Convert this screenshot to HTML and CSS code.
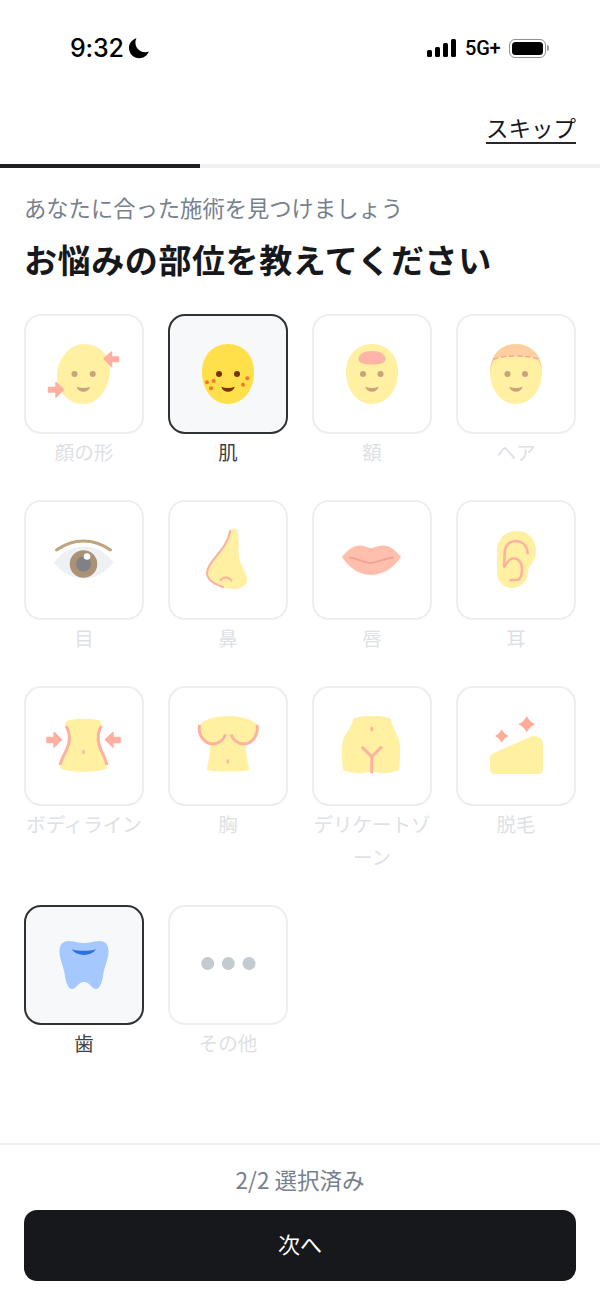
FILE: index.html
```html
<!DOCTYPE html>
<html lang="ja">
<head>
  <meta charset="UTF-8">
  <title>お悩みの部位</title>
  <link rel="stylesheet" href="styles.css">
</head>
<body>

  <div class="statusbar">
    <div class="status-left">
      <span class="time">9:32</span>
      <svg class="moon" width="22" height="24" viewBox="0 0 22 24"><path d="M8.5 2.2C3.9 3.5 1 7.4 1 12c0 5.7 4.6 10.2 10.2 10.2 4.4 0 8.2-2.7 9.6-6.7-1.1.5-2.4.7-3.7.7-5.4 0-9.7-4.3-9.7-9.7 0-1.5.3-2.9 1.1-4.3z"/></svg>
    </div>
    <div class="status-right">
      <div class="signal"><i class="b1"></i><i class="b2"></i><i class="b3"></i><i class="b4"></i></div>
      <span class="network">5G+</span>
      <div class="battery"><div class="battery-fill"></div></div>
      <div class="battery-cap"></div>
    </div>
  </div>

  <div class="topbar">
    <a class="skip">スキップ</a>
  </div>

  <div class="progress"><div class="progress-done"></div></div>

  <p class="sub">あなたに合った施術を見つけましょう</p>
  <h1>お悩みの部位を教えてください</h1>

  <div class="parts">

    <div class="part">
      <div class="tile">
        <svg class="icon faded" viewBox="0 0 120 120">
          <path class="skin" d="M60 30C75 30 86.500 41 86 56 85.500 74 75 90 59 90 44 90 32.500 77 33 62 33.500 45 45 30 60 30z"/>
          <circle class="eye" cx="50.500" cy="60" r="3"/><circle class="eye" cx="68.700" cy="60" r="3"/>
          <path class="mouth" d="M52.700 72.700c4 1.600 9.300 1.600 13.300 0-1.500 6.700-11.800 6.700-13.300 0z"/>
          <path class="arrow" d="M80 44.500l7.500-6.500v5H94.500v4.500H87.500v5z"/>
          <path class="arrow" d="M39.500 75.500l-7.500-7v5H24.500v4.500H32v5z"/>
        </svg>
      </div>
      <span class="label">顔の形</span>
    </div>

    <div class="part on">
      <div class="tile">
        <svg class="icon" viewBox="0 0 120 120">
          <path class="skin" d="M60 30c15 0 26 11 26 28 0 18-11 32-26 32S34 76 34 58c0-17 11-28 26-28z"/>
          <circle class="eye-dark" cx="51" cy="60" r="3"/><circle class="eye-dark" cx="69" cy="60" r="3"/>
          <path class="mouth-dark" d="M53.300 72.700c4 1.600 9.300 1.600 13.300 0-1.500 6.700-11.800 6.700-13.300 0z"/>
          <g class="freckle">
            <circle cx="39" cy="68.300" r="2"/><circle cx="45.700" cy="67" r="2"/><circle cx="43" cy="74.300" r="2"/>
            <circle cx="79.300" cy="64.300" r="2"/><circle cx="75" cy="70.700" r="2"/>
          </g>
        </svg>
      </div>
      <span class="label">肌</span>
    </div>

    <div class="part">
      <div class="tile">
        <svg class="icon faded" viewBox="0 0 120 120">
          <path class="skin" d="M60 30c15 0 26 11 26 28 0 18-11 32-26 32S34 76 34 58c0-17 11-28 26-28z"/>
          <path class="patch" d="M60 37c8 0 13.500 3.500 13.500 8 0 4-5 5.500-13.500 5.500S46.500 49 46.500 45c0-4.500 5.500-8 13.500-8z"/>
          <circle class="eye" cx="51" cy="60" r="3"/><circle class="eye" cx="68.500" cy="60" r="3"/>
          <path class="mouth" d="M53.300 72.700c4 1.600 9.300 1.600 13.300 0-1.500 6.700-11.800 6.700-13.300 0z"/>
        </svg>
      </div>
      <span class="label">額</span>
    </div>

    <div class="part">
      <div class="tile">
        <svg class="icon faded" viewBox="0 0 120 120">
          <path class="skin" d="M60 30c15 0 26 11 26 28 0 18-11 32-26 32S34 76 34 58c0-17 11-28 26-28z"/>
          <path class="hair" d="M34 58c0-17 11-28 26-28s26 11 26 28c-1-6-3-11-6-14-6-2-34-2-40 0-3 3-5 8-6 14z"/>
          <path class="hairline" d="M38 45c12-4 32-4 44 0"/>
          <circle class="eye" cx="51.500" cy="60" r="3"/><circle class="eye" cx="69" cy="60" r="3"/>
          <path class="mouth" d="M53.300 72.700c4 1.600 9.300 1.600 13.300 0-1.500 6.700-11.800 6.700-13.300 0z"/>
        </svg>
      </div>
      <span class="label">ヘア</span>
    </div>

    <div class="part">
      <div class="tile">
        <svg class="icon" viewBox="0 0 120 120">
          <path class="sclera" d="M30 62.500C38 52 48 46.500 60 46.500S81 52 89.500 62.500C81 73 71 78.500 60 78.500S38 73 30 62.500z"/>
          <path class="brow" d="M32.500 50c17-12 37-12 54 0"/>
          <circle class="iris" cx="59.500" cy="64" r="13.800"/>
          <circle class="pupil" cx="59.500" cy="64" r="7.500"/>
          <circle class="glint" cx="63" cy="56.500" r="3.300"/>
        </svg>
      </div>
      <span class="label">目</span>
    </div>

    <div class="part">
      <div class="tile">
        <svg class="icon faded" viewBox="0 0 120 120">
          <path class="skin" d="M61 31c2-3 8-3 9 1 1 8 0 17 1 25 1 9 8 15 8 22 0 6-5 10-12 10-5 0-11-1-16-3-6-2-11-7-11-13 0-12 18-24 21-42z"/>
          <path class="line" d="M62 31c-2 18-23 30-23 42 0 6 7 11 16 14"/>
          <path class="line" d="M52.500 80c3-3.500 8-3.500 11 .5"/>
        </svg>
      </div>
      <span class="label">鼻</span>
    </div>

    <div class="part">
      <div class="tile">
        <svg class="icon faded" viewBox="0 0 120 120">
          <path class="lip" d="M30 57c4-5 10-11 17-11.500 5-.5 9 2.500 12 2.500s8-3 13-2.500c7 .5 13 6.500 17 11.500-5 8-16 18-30 18S35 65 30 57z"/>
          <path class="lip-line" d="M38 57.700c8 .5 14 5.300 20 5.300s15-5 23-5.300"/>
        </svg>
      </div>
      <span class="label">唇</span>
    </div>

    <div class="part">
      <div class="tile">
        <svg class="icon faded" viewBox="0 0 120 120">
          <path class="skin" d="M61 31c12 0 19 9 19 20 0 7-3 11-6 15-3 5-1 9-4 14-3 5-8 8-14 8-9 0-15-7-15-16V51c0-12 8-20 20-20z"/>
          <path class="line medium" d="M71.700 53.300C71 45 66 41 59.500 41S48.700 46 48.700 53.300L48 67.300c3-5 6-9 9.300-9 5 0 8.700 4 8.700 10.500 0 6-1 8.500-3 10.500-2 .8-5 .7-8.500.9"/>
        </svg>
      </div>
      <span class="label">耳</span>
    </div>

    <div class="part">
      <div class="tile">
        <svg class="icon faded" viewBox="0 0 120 120">
          <path class="skin" d="M43 35C50 32 70 32 77 35 78 42 73 46 73 53 73 63 81 70 83 82 76 87 43 87 36 82 38 70 46 63 46 53 46 46 41 42 41 37z"/>
          <path class="line wide" d="M42 40C46 46 45.500 52 45 56 44 64 38 70 36 79"/>
          <path class="line wide" d="M77.500 40C73.500 46 74 52 74.500 56 75.500 64 81 70 83 79"/>
          <path class="arrow" d="M37.500 53.500l-7.500-7v5H23v5h7v4.500z"/>
          <path class="arrow" d="M81.500 53.500l7.500-7v5H96v5h-7v4.500z"/>
          <ellipse class="navel" cx="59.500" cy="66" rx="1.200" ry="2.200"/>
        </svg>
      </div>
      <span class="label">ボディライン</span>
    </div>

    <div class="part">
      <div class="tile">
        <svg class="icon faded" viewBox="0 0 120 120">
          <path class="skin" d="M60 30c12 0 24 3 30 9 2 10-3 18-12 19-1 8 2 17 3 26-7 2-35 2-42 0 1-9 4-18 3-26-9-1-13-9-11-19 6-6 17-9 29-9z"/>
          <path class="line wide" d="M31.500 39c-2 11 6 19 13 19 6 0 11-4 13-9.500"/>
          <path class="line wide" d="M89 39c2 11-6 19-13 19-6 0-11-4-13-9.500"/>
          <ellipse class="navel" cx="59.700" cy="75.500" rx="1.200" ry="2.200"/>
        </svg>
      </div>
      <span class="label">胸</span>
    </div>

    <div class="part">
      <div class="tile">
        <svg class="icon faded" viewBox="0 0 120 120">
          <path class="skin" d="M41 33c5-4 33-4 38 0 1 9 6 14 8 21 2 9 1 22 0 30-8 4-20 4-27 1-8 3-20 3-29-1-1-8-2-21 0-30 2-7 9-12 10-21z"/>
          <ellipse class="navel" cx="59.700" cy="43" rx="1.400" ry="2.600"/>
          <path class="line wide" d="M49.700 60.700l10 10 10-10M59.700 70.700v16.500"/>
        </svg>
      </div>
      <span class="label">デリケートゾーン</span>
    </div>

    <div class="part">
      <div class="tile">
        <svg class="icon faded" viewBox="0 0 120 120">
          <path class="skin" d="M38 67l37-16.500c5-2 12 1 12 7V83c0 3-2 5-5 5H39c-3 0-5-2-5-5V73c0-3 1-5 4-6z"/>
          <path class="sparkle" d="M70.700 30c2 4 4.500 6.500 8.300 8.300-3.800 1.800-6.300 4.300-8.300 8.300-2-4-4.500-6.500-8.300-8.300 3.800-1.800 6.300-4.300 8.300-8.300z"/>
          <path class="sparkle" d="M45.700 43.300c1.600 3.200 3.600 5.200 6.700 6.700-3.100 1.500-5.100 3.500-6.700 6.700-1.600-3.200-3.600-5.200-6.700-6.700 3.100-1.500 5.100-3.500 6.700-6.700z"/>
        </svg>
      </div>
      <span class="label">脱毛</span>
    </div>

    <div class="part on">
      <div class="tile">
        <svg class="icon" viewBox="0 0 120 120">
          <path class="tooth" d="M44 36c6 0 10 2 16 2s10-2 16-2c5 0 8.500 3.500 8.500 10 0 8-3.500 14-5 22-1 6-2.500 16-7.500 16-4.500 0-6-7-12-7s-7.500 7-12 7c-5 0-6.500-10-7.500-16-1.500-8-5-14-5-22 0-6.500 3.500-10 8.500-10z"/>
          <path class="tooth-line" d="M47.700 44.300c7 2 17 2 24.300 0-5 7.500-19 7.500-24.300 0z"/>
        </svg>
      </div>
      <span class="label">歯</span>
    </div>

    <div class="part">
      <div class="tile">
        <svg class="icon" viewBox="0 0 120 120">
          <circle class="more" cx="39.700" cy="58.500" r="6.500"/>
          <circle class="more" cx="60.300" cy="58.500" r="6.500"/>
          <circle class="more" cx="81" cy="58.500" r="6.500"/>
        </svg>
      </div>
      <span class="label">その他</span>
    </div>

  </div>

  <div class="footer">
    <div class="count">2/2 選択済み</div>
    <button class="next-btn">次へ</button>
  </div>

</body>
</html>
```

FILE: styles.css
```css
html, body {
  margin: 0;
  height: 100%;
}

body {
  display: flex;
  flex-direction: column;
  height: 1305px;
  background: white;
  color: #16181b;
  font-family: "Noto Sans CJK JP", "Liberation Sans", sans-serif;
  overflow: hidden;
}

.statusbar {
  height: 97px;
  flex-shrink: 0;
  display: flex;
  justify-content: space-between;
  align-items: flex-start;
  padding: 33px 51px 0 70px;
  box-sizing: border-box;
}

.status-left {
  display: flex;
  align-items: center;
  gap: 4px;
  height: 30px;
}

.time {
  font-family: Inter, sans-serif;
  font-size: 25px;
  font-weight: 500;
  letter-spacing: -0.2px;
  color: black;
}

.moon {
  fill: black;
}

.status-right {
  display: flex;
  align-items: center;
  height: 30px;
}

.signal {
  display: flex;
  align-items: flex-end;
  gap: 2.5px;
  height: 18px;
  margin-right: 9px;
}

.signal i {
  display: block;
  width: 5.5px;
  background: black;
  border-radius: 1.5px;
}

.b1 { height: 7px; }
.b2 { height: 10px; }
.b3 { height: 14px; }
.b4 { height: 18px; }

.network {
  font-family: Roboto, sans-serif;
  font-size: 20px;
  font-weight: 500;
  letter-spacing: -0.2px;
  width: 35px;
  margin-right: 9px;
  color: black;
}

.battery {
  width: 37px;
  height: 19px;
  box-sizing: border-box;
  border: 1.5px solid #8f8f8f;
  border-radius: 6px;
  padding: 2px;
}

.battery-fill {
  height: 100%;
  background: black;
  border-radius: 3.5px;
}

.battery-cap {
  width: 2px;
  height: 6px;
  margin-left: 1px;
  background: #9a9a9a;
  border-radius: 0 2px 2px 0;
}

.topbar {
  height: 67px;
  flex-shrink: 0;
  display: flex;
  justify-content: flex-end;
  align-items: flex-start;
  padding: 16px 24px 0 0;
  box-sizing: border-box;
}

.skip {
  font-size: 22.5px;
  line-height: 29px;
  color: #16181b;
  border-bottom: 2px solid #26282b;
}

.progress {
  height: 3.5px;
  flex-shrink: 0;
  background: #eef0f2;
}

.progress-done {
  width: 200px;
  height: 100%;
  background: #1d1f22;
}

.sub {
  margin: 22px 24px 0;
  font-size: 22.3px;
  line-height: 34px;
  color: #76808e;
}

h1 {
  margin: 9px 24px 0;
  font-size: 33px;
  line-height: 52px;
  letter-spacing: 0.6px;
  font-weight: 700;
  color: #16181b;
}

.parts {
  margin: 29px 24px 0;
  display: grid;
  grid-template-columns: repeat(4, 120px);
  column-gap: 24px;
  row-gap: 32px;
}

.part {
  display: flex;
  flex-direction: column;
  align-items: center;
}

.tile {
  width: 120px;
  height: 120px;
  box-sizing: border-box;
  border: 2px solid #eceef0;
  border-radius: 17px;
  background: white;
  display: flex;
  justify-content: center;
  align-items: center;
}

.part.on .tile {
  border-color: #2f3235;
  background: #f6f8fa;
}

.label {
  margin-top: 1px;
  font-size: 19.5px;
  line-height: 33px;
  text-align: center;
  color: #dde1e5;
}

.part.on .label {
  color: #3c4146;
}

.icon {
  width: 120px;
  height: 120px;
  flex-shrink: 0;
}

.skin { fill: #ffdf4a; }
.faded .skin { fill: #fff0a2; }
.eye { fill: #c9a27e; }
.eye-dark { fill: #7a3208; }
.mouth { fill: #c9a27e; }
.mouth-dark { fill: #7a3208; }
.freckle { fill: #f5772e; }
.arrow { fill: #ffb0a0; stroke: #ffb0a0; stroke-width: 1.5px; stroke-linejoin: round; }
.patch { fill: #ffb4a8; }
.hair { fill: #ffcfa2; }
.sclera { fill: #eef1f3; }
.iris { fill: #ab9274; }
.pupil { fill: #808085; }
.glint { fill: white; }
.lip { fill: #ffbfac; }
.navel { fill: #ffb0a0; }
.sparkle { fill: #ffab98; }
.tooth { fill: #a5c9ff; }
.tooth-line { fill: #2f6fe0; }
.more { fill: #c3cbd0; }

.brow, .line, .hairline, .lip-line {
  fill: none;
  stroke-linecap: round;
}

.brow { stroke: #bfa57f; stroke-width: 3px; }
.line { stroke: #ffb0a0; stroke-width: 2px; }
.line.medium { stroke-width: 2.5px; }
.line.wide { stroke-width: 3px; stroke-linecap: butt; }
.hairline { stroke: #f8a898; stroke-width: 1.5px; stroke-dasharray: 4 4; }
.lip-line { stroke: #efa593; stroke-width: 2px; }

.footer {
  margin-top: auto;
  flex-shrink: 0;
  border-top: 2px solid #eef0f2;
  padding: 17px 24px 24px;
  display: flex;
  flex-direction: column;
}

.count {
  font-size: 22.5px;
  line-height: 34px;
  text-align: center;
  color: #76808e;
}

.next-btn {
  margin-top: 14px;
  height: 71px;
  padding-bottom: 6px;
  border: none;
  border-radius: 13px;
  background: #16181b;
  color: white;
  font-family: inherit;
  font-size: 22px;
  cursor: pointer;
}
```
